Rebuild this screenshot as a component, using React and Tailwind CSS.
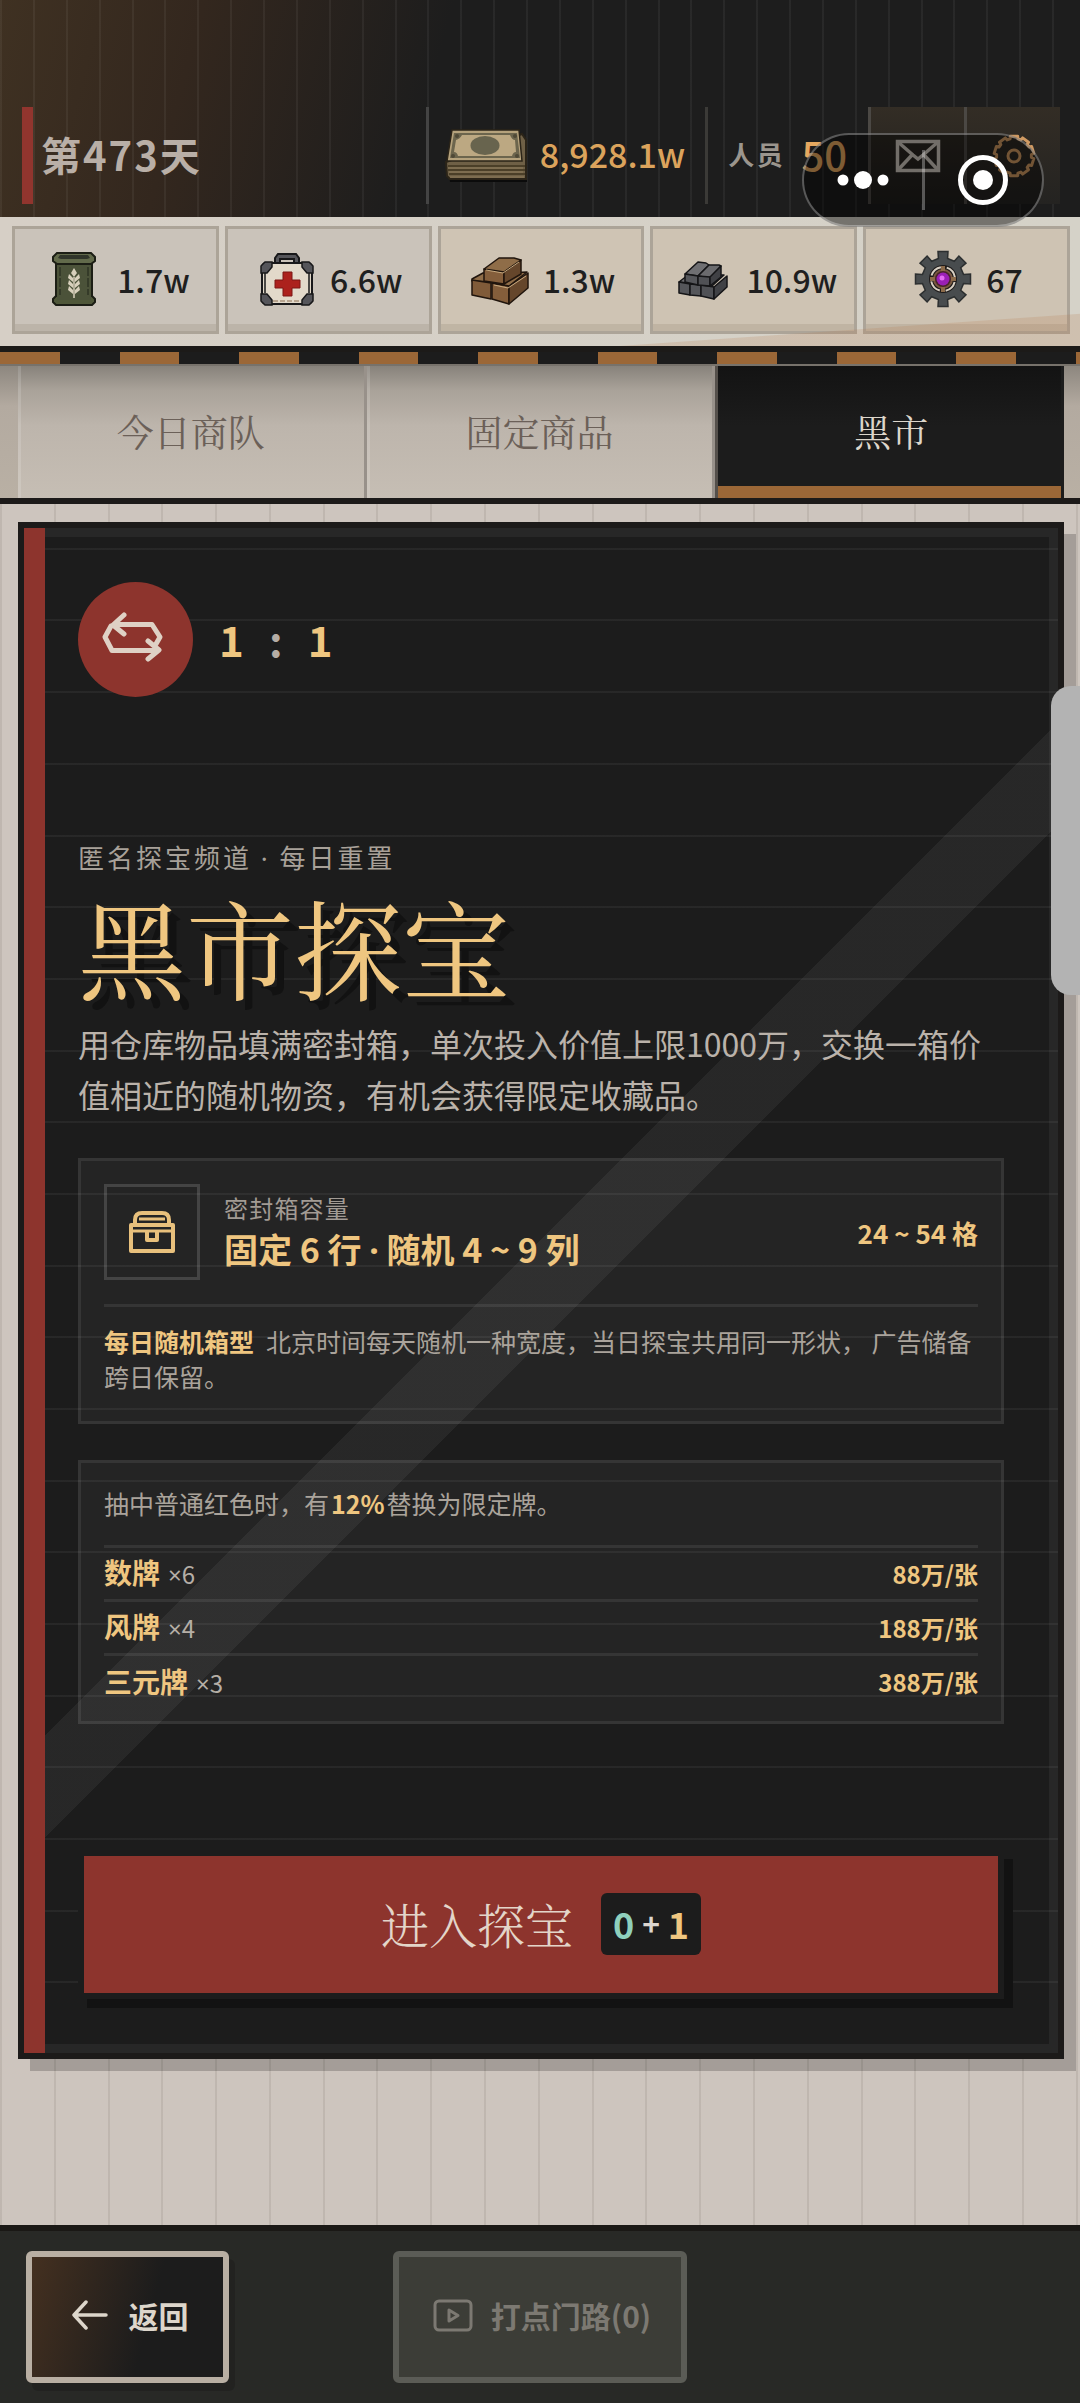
import { useState } from 'react'

const SANS = "font-['Noto_Sans_CJK_SC',sans-serif]"
const SERIF = "font-['Noto_Serif_CJK_SC','Songti_SC','Noto_Sans_CJK_SC',serif]"
// latin face first, keeps the big heading's line box tight
const DISPLAY = "font-['Liberation_Serif','Noto_Serif_CJK_SC','Songti_SC',serif]"
// narrow · and × instead of the full-width CJK ones
const LATIN = "font-['Noto_Sans',sans-serif]"

const TABS = ['今日商队', '固定商品', '黑市']

const TILES = [
  { name: '数牌', count: 6, price: '88万/张' },
  { name: '风牌', count: 4, price: '188万/张' },
  { name: '三元牌', count: 3, price: '388万/张' },
]

function gearPath(cx, cy, teeth, outer, inner, width = 0.26) {
  const step = (Math.PI * 2) / teeth
  const pt = (r, a) => `${(cx + r * Math.sin(a)).toFixed(1)} ${(cy - r * Math.cos(a)).toFixed(1)}`
  const parts = []
  for (let i = 0; i < teeth; i++) {
    const a = i * step
    parts.push(
      pt(inner, a - step * width),
      pt(outer, a - step * width * 0.82),
      pt(outer, a + step * width * 0.82),
      pt(inner, a + step * width)
    )
  }
  return `M${parts.join('L')}Z`
}

function MoneyIcon() {
  return (
    <svg width="84" height="56" viewBox="0 0 84 56" aria-hidden="true">
      <path d="M3 38h79v16H5z" fill="#0b0b0b" />
      <path d="M1 34L2 48L5 51H81V12L77 6Z" fill="#6f6046" stroke="#2b2418" strokeWidth="2" />
      <path d="M3 38H80M3 42H80M4 46H80" stroke="#40351f" strokeWidth="1.5" />
      <path d="M3 40H78M4 44H78M5 49H79" stroke="#8d7b5b" strokeWidth="1" />
      <path d="M7 2H74L77 33H2Z" fill="#b5a27c" stroke="#2b2418" strokeWidth="1.5" />
      <path d="M9 5H72L75 30H5Z" fill="#6c654d" />
      <path d="M17 7H65Q67 12 70 12L71 24Q68 24 67 28H13Q12 24 9 24L11 12Q15 11 17 7Z" fill="#bca882" />
      <ellipse cx="40" cy="17.5" rx="14.5" ry="9.5" fill="#68644e" />
      <circle cx="12" cy="8" r="2" fill="#4f4936" />
      <circle cx="70" cy="8" r="2" fill="#4f4936" />
      <circle cx="8" cy="28" r="2" fill="#4f4936" />
      <circle cx="72" cy="28" r="2" fill="#4f4936" />
    </svg>
  )
}

function GrainIcon() {
  return (
    <svg width="62" height="60" viewBox="0 0 62 60" aria-hidden="true">
      <path d="M13 12H49V50H13Z" fill="#4b5239" stroke="#1c1e15" strokeWidth="2" />
      <path d="M14 4H48L52 8V12L48 15H14L10 12V8Z" fill="#626a4b" stroke="#1c1e15" strokeWidth="2" />
      <path d="M17 6H45L47 9L44 10H18L15 9Z" fill="#30352a" />
      <path d="M13 47L10 50V53L13 56H49L52 53V50L49 47Z" fill="#4f5739" stroke="#1c1e15" strokeWidth="2" />
      <path d="M14 46H48V51H14Z" fill="#4b5239" />
      <path d="M17 18V46M45 18V46" stroke="#353b29" strokeWidth="2" strokeDasharray="9 2" />
      <g fill="#d8d0bc">
        <path d="M31 19l3 5-3 4-3-4z" />
        <path d="M26 25l4 4v4l-5-4zM36 25l-4 4v4l5-4z" />
        <path d="M26 31l4 4v4l-5-4zM36 31l-4 4v4l5-4z" />
        <path d="M26 37l4 4v4l-5-4zM36 37l-4 4v4l5-4z" />
      </g>
      <path d="M31 28V49" stroke="#d8d0bc" strokeWidth="1.5" />
    </svg>
  )
}

function MedkitIcon() {
  return (
    <svg width="62" height="60" viewBox="0 0 62 60" aria-hidden="true">
      <path d="M19 15V9L22 5H40L43 9V15H38V10H24V15Z" fill="#55555a" stroke="#18181a" strokeWidth="2" />
      <rect x="6" y="14" width="50" height="41" rx="4" fill="#e2d9ca" stroke="#18181a" strokeWidth="2" />
      <path d="M9 24V44M53 24V44" stroke="#18181a" strokeWidth="1.5" />
      <path d="M17 52H45" stroke="#b7a48f" strokeWidth="2" strokeDasharray="5 2" />
      <g fill="#55555a" stroke="#18181a" strokeWidth="1.5">
        <path d="M5 24V17L9 13H16V18L11 24Z" />
        <path d="M57 24V17L53 13H46V18L51 24Z" />
        <path d="M5 45V52L9 56H16V51L11 45Z" />
        <path d="M57 45V52L53 56H46V51L51 45Z" />
      </g>
      <path d="M27 23H36V31H44V39H36V47H27V39H19V31H27Z" fill="#ac211d" stroke="#7c1714" strokeWidth="1" />
    </svg>
  )
}

function WoodIcon() {
  return (
    <svg width="62" height="60" viewBox="0 0 62 60" aria-hidden="true">
      <g stroke="#20150d" strokeWidth="1.5" strokeLinejoin="round">
        <path d="M3 30L14 24H26L22 33L3 32Z" fill="#8f6d48" />
        <path d="M3 31L22 34V50L3 46Z" fill="#805b39" />
        <path d="M23 34L40 37V55L23 50Z" fill="#845e3b" />
        <path d="M40 37L59 24V39L40 55Z" fill="#65462b" />
        <path d="M23 34L38 24L58 23L40 37Z" fill="#8f6d48" />
        <path d="M15 20L35 23V35L15 32Z" fill="#845e3b" />
        <path d="M35 23L52 11V25L35 35Z" fill="#65462b" />
        <path d="M15 20L30 9H45L52 11L35 23Z" fill="#8f6d48" />
      </g>
      <path d="M17 21L34 24L50 13M25 36L39 39L57 27" fill="none" stroke="#c9ab80" strokeWidth="1" />
    </svg>
  )
}

function IronIcon() {
  return (
    <svg width="62" height="60" viewBox="0 0 62 60" aria-hidden="true">
      <g stroke="#151517" strokeWidth="1.5" strokeLinejoin="round">
        <path d="M7 33L16 26H52L40 37Z" fill="#6d6d70" />
        <path d="M7 33L18 35V46L7 44Z" fill="#55565a" />
        <path d="M18 35L29 36V47L18 46Z" fill="#55565a" />
        <path d="M29 36L42 38V50L29 47Z" fill="#505155" />
        <path d="M42 38L55 27V38L42 50Z" fill="#404145" />
        <path d="M13 25L26 13L34 14L37 16L26 27Z" fill="#6f6f72" />
        <path d="M26 27L37 16L47 16L49 17L38 29Z" fill="#6b6b6e" />
        <path d="M13 25L26 27V36L13 33Z" fill="#55565a" />
        <path d="M26 27L38 28V37L26 36Z" fill="#505155" />
        <path d="M38 28L49 17V28L38 37Z" fill="#404145" />
      </g>
    </svg>
  )
}

function CoreIcon() {
  return (
    <svg width="62" height="60" viewBox="0 0 62 60" aria-hidden="true">
      <path d={gearPath(31, 30, 8, 28, 21, 0.28)} fill="#484c4e" stroke="#2c2f30" strokeWidth="1.5" />
      <circle cx="31" cy="30" r="14" fill="#1d1a1a" />
      <circle cx="31" cy="30" r="12" fill="none" stroke="#d8cfc2" strokeWidth="2" strokeDasharray="13 6" strokeDashoffset="-3" />
      <circle cx="31" cy="30" r="9" fill="#48242a" stroke="#7a5940" strokeWidth="2" />
      <path d="M31 17V22M31 38V43M18 30H23M39 30H44" stroke="#8b6a49" strokeWidth="4" />
      <circle cx="31" cy="30" r="6.5" fill="#9a1fb5" />
      <circle cx="30" cy="29" r="2.5" fill="#e46bf2" />
    </svg>
  )
}

const RESOURCES = [
  { label: '粮食', value: '1.7w', Icon: GrainIcon, tone: 'bg-[#cac3ba]' },
  { label: '医疗', value: '6.6w', Icon: MedkitIcon, tone: 'bg-[#cac3ba]' },
  { label: '木材', value: '1.3w', Icon: WoodIcon, tone: 'bg-[#cfc4b4]' },
  { label: '铁锭', value: '10.9w', Icon: IronIcon, tone: 'bg-[#cec3b3]' },
  { label: '核心', value: '67', Icon: CoreIcon, tone: 'bg-[#cec3b3]' },
]

function TopBar() {
  return (
    <header className="bg-[repeating-linear-gradient(90deg,rgba(255,255,255,0.05)_0,rgba(255,255,255,0.05)_2px,transparent_2px,transparent_3.044%),linear-gradient(105deg,#3f3122_0%,#33271e_18%,#1d1d1d_40%)] pt-[107px] pb-[13px] pl-[22px] pr-5">
      <div className="flex h-[97px] items-stretch">
        <div className="flex flex-1 items-center border-l-[11px] border-[#91352e] pb-1 pl-2 text-[40px] font-bold tracking-wider text-[#b9afa7]">
          第473天
        </div>
        <div className="flex items-center gap-[11px] border-l-[3px] border-[#444] pl-4 pr-5">
          <MoneyIcon />
          <span className="pb-1 text-[34px] font-medium text-[#dba35c]">8,928.1w</span>
        </div>
        <div className="flex items-center gap-4 border-l-[3px] border-[#3b3a37] pb-1 pl-5 pr-[21px]">
          <span className="text-[26px] font-bold tracking-widest text-[#9b958d]">人员</span>
          <span className="text-[40px] font-medium text-[#e5a860]">50</span>
        </div>
        <button
          type="button"
          aria-label="邮件"
          className="flex w-24 items-center justify-center border-l-[3px] border-[#4b4844] bg-[linear-gradient(180deg,#332d25,#1f1e1c)]"
        >
          <svg width="46" height="34" viewBox="0 0 46 34" fill="none" stroke="#cfc8bf" strokeWidth="3.5" aria-hidden="true">
            <rect x="2.5" y="2.5" width="41" height="29" />
            <path d="M3 3L18 16L23 20L28 16L43 3M3 31L17 16M43 31L29 16" />
          </svg>
        </button>
        <button
          type="button"
          aria-label="设置"
          className="flex w-24 items-center justify-center border-l-[3px] border-[#4b4844] bg-[linear-gradient(180deg,#332d25,#242321)]"
        >
          <svg width="46" height="46" viewBox="0 0 46 46" fill="none" stroke="#d09a62" strokeWidth="3" strokeLinejoin="round" aria-hidden="true">
            <path d={gearPath(23, 23, 10, 20, 17.5, 0.36)} />
            <circle cx="23" cy="23" r="6" />
          </svg>
        </button>
      </div>
    </header>
  )
}

function HostCapsule() {
  return (
    <div className="absolute right-9 top-[133px] flex h-[94px] w-[242px] items-center rounded-full border-2 border-white/30 bg-black/45">
      <button type="button" aria-label="更多" className="flex flex-1 items-center justify-center">
        <svg width="52" height="20" viewBox="0 0 52 20" fill="#fff" aria-hidden="true">
          <circle cx="6" cy="10" r="5.5" />
          <circle cx="26" cy="10" r="9" />
          <circle cx="46" cy="10" r="5.5" />
        </svg>
      </button>
      <span className="h-[60px] w-[3px] bg-white/30" />
      <button type="button" aria-label="关闭" className="flex flex-1 items-center justify-center">
        <svg width="52" height="52" viewBox="0 0 52 52" aria-hidden="true">
          <circle cx="26" cy="26" r="22.5" fill="none" stroke="#fff" strokeWidth="5" />
          <circle cx="26" cy="26" r="10" fill="#fff" />
        </svg>
      </button>
    </div>
  )
}

function ResourceBar() {
  return (
    <section className="relative bg-[linear-gradient(90deg,#d6cfc6,#d5d2c8)] pt-[9px] pb-3 pl-3 pr-[10px]">
      <ul className="grid grid-cols-5 gap-[6px]">
        {RESOURCES.map(({ label, value, Icon, tone }) => (
          <li
            key={label}
            aria-label={label}
            className={`flex h-[108px] items-center justify-center gap-3 border-[3px] border-[#aca498] pb-[2px] pl-[2px] shadow-[inset_0_-7px_0_rgba(90,70,50,0.12)] ${tone}`}
          >
            <Icon />
            <span className="text-[32px] font-medium text-[#1f1f1f]">{value}</span>
          </li>
        ))}
      </ul>
      <span className="pointer-events-none absolute inset-0 bg-[linear-gradient(176deg,transparent_84%,rgba(180,120,75,0.2)_84.5%)]" />
    </section>
  )
}

function TabBar({ active, onChange }) {
  return (
    <nav className="border-t-2 border-b-[6px] border-t-[#77726b] border-b-[#1c1a19] bg-[linear-gradient(180deg,#8d877f_0,#b3aaa0_40px,#b9b0a4_100%)] pl-[18px] pr-4">
      <div role="tablist" className="grid grid-cols-3">
        {TABS.map((tab) => (
          <button
            key={tab}
            type="button"
            role="tab"
            aria-selected={tab === active}
            onClick={() => onChange(tab)}
            className={`h-[132px] text-[37px] ${SERIF} ${
              tab === active
                ? 'border-l-[3px] border-[#55504b] bg-[linear-gradient(180deg,#131313,#1c1c1c_60px)] text-[#ddd6cb] shadow-[inset_-3px_0_0_#1c1c1c,inset_0_-12px_0_#9b6737]'
                : 'border-r-[3px] border-[#98918a] bg-[linear-gradient(180deg,#87827b_0,#a9a299_24px,#bdb5ac_60px,#c6beb4_100%)] text-[#6b6058] shadow-[inset_3px_0_0_rgba(255,255,255,0.15)]'
            }`}
          >
            {tab}
          </button>
        ))}
      </div>
    </nav>
  )
}

function CapacityBox() {
  return (
    <section className="mt-[38px] border-[3px] border-white/8 bg-white/4 px-[23px] pt-[23px] pb-[27px]">
      <div className="flex items-center">
        <div className="flex size-24 items-center justify-center border-[3px] border-white/15">
          <svg width="48" height="44" viewBox="0 0 48 44" fill="none" stroke="#e8c07c" strokeWidth="4" strokeLinejoin="round" aria-hidden="true">
            <path d="M7 14V10Q7 3 14 3H34Q41 3 41 10V14" />
            <path d="M11 9H37" strokeWidth="3" />
            <path d="M3 15H45V41H3Z" />
            <path d="M3 21H45" strokeWidth="3" />
            <path d="M19 22V30H29V22" />
          </svg>
        </div>
        <div className="ml-6 flex-1 pb-1">
          <p className="text-[24px] leading-[38px] tracking-wider text-[#a29b94]">密封箱容量</p>
          <p className="text-[34px] leading-[44px] font-bold text-[#efc680]">
            固定 6 行 <span className={LATIN}>·</span> 随机 4 ~ 9 列
          </p>
        </div>
        <p className="text-[26px] font-bold text-[#efc680]">24 ~ 54 格</p>
      </div>
      <p className="mt-6 border-t-[3px] border-white/8 pt-[17px] text-[25px] leading-[35px] text-[#aaa39b]">
        <strong className="mr-3 font-bold text-[#efc680]">每日随机箱型</strong>
        北京时间每天随机一种宽度，当日探宝共用同一形状， 广告储备跨日保留。
      </p>
    </section>
  )
}

function OddsBox() {
  return (
    <section className="mt-9 border-[3px] border-white/8 bg-white/4 px-[23px] pt-[23px] pb-3">
      <p className="text-[25px] leading-[35px] text-[#aaa39b]">
        抽中普通红色时，有<strong className="mx-[2px] font-bold text-[#efc680]">12%</strong>替换为限定牌。
      </p>
      <table className="mt-6 w-full">
        <tbody>
          {TILES.map((tile) => (
            <tr key={tile.name} className="h-[54px] border-t-[3px] border-white/8">
              <th scope="row" className="text-left text-[28px] leading-[36px] font-bold text-[#efc680]">
                {tile.name}
                <span className="ml-2 text-[24px] font-normal text-[#b5aea6]">
                  <span className={LATIN}>×</span>
                  {tile.count}
                </span>
              </th>
              <td className="text-right text-[24px] leading-[36px] font-bold text-[#efc680]">{tile.price}</td>
            </tr>
          ))}
        </tbody>
      </table>
    </section>
  )
}

function BlackMarketCard() {
  return (
    <article className="border-[6px] border-[#1c1a19] bg-[#1c1c1c] shadow-[12px_12px_0_rgba(0,0,0,0.2)]">
      <div className="relative bg-[linear-gradient(135deg,transparent_48%,rgba(255,255,255,0.05)_48%,rgba(255,255,255,0.05)_52%,transparent_52%),repeating-linear-gradient(0deg,transparent_0,transparent_calc(4.7%_-_2px),rgba(255,255,255,0.05)_calc(4.7%_-_2px),rgba(255,255,255,0.05)_4.7%)] p-[54px] shadow-[inset_0_0_0_9px_rgba(255,255,255,0.05)]">
        <span className="absolute inset-y-0 left-0 w-[21px] bg-[#8d342d]" />
        <div className="flex items-center">
          <div className="flex size-[115px] items-center justify-center rounded-full bg-[#8d342d] pr-[6px] pb-[6px]">
            <svg width="62" height="50" viewBox="0 0 62 50" fill="none" stroke="#dfd1c5" strokeWidth="5" strokeLinecap="round" strokeLinejoin="round" aria-hidden="true">
              <path d="M22 3L11 13L22 22M12 12.5H50L58 25L54 32" />
              <path d="M46 29L57 38L46 47M55 38.5H10L3 25L9 14" />
            </svg>
          </div>
          <p className="ml-[26px] flex items-center gap-5 pb-[2px] text-[42px] font-bold text-[#efc680]">
            <span>1</span>
            <span className="w-6 text-center text-[#b5ada5]">:</span>
            <span>1</span>
          </p>
        </div>
        <p className="mt-[140px] text-[26px] leading-10 tracking-[3px] text-[#a8a199]">
          匿名探宝频道 <span className={LATIN}>·</span> 每日重置
        </p>
        <h1 className={`mt-[18px] text-[108px] leading-[120px] text-[#efc680] [text-shadow:9px_9px_0_#121212] ${DISPLAY}`}>
          黑市探宝
        </h1>
        <p className="mt-[2px] text-[32px] leading-[51px] text-[#bab2aa]">
          用仓库物品填满密封箱，单次投入价值上限1000万，交换一箱价值相近的随机物资，有机会获得限定收藏品。
        </p>
        <CapacityBox />
        <OddsBox />
        <button
          type="button"
          className="mt-[126px] flex h-[149px] w-full items-center justify-center gap-7 border-[6px] border-[#1c1c1c] bg-[#8d342d] shadow-[9px_9px_0_#121212]"
        >
          <span className={`text-[48px] font-light text-[#e3d5c9] ${SERIF}`}>进入探宝</span>
          <span className="flex h-[62px] items-center gap-2 rounded-md bg-[#1c1c1c] px-3 pb-[2px] text-[36px] font-bold">
            <span className="text-[#8fd0bc]">0</span>
            <span className="text-[30px] text-[#ddd6cf]">+</span>
            <span className="text-[#efc680]">1</span>
          </span>
        </button>
      </div>
    </article>
  )
}

function BottomBar() {
  return (
    <footer className="grid grid-cols-[1fr_auto_1fr] items-center border-t-[6px] border-[#1a1815] bg-[#282926] px-[26px] py-5">
      <button
        type="button"
        className="flex h-[132px] w-[203px] items-center justify-center gap-5 rounded-md border-[6px] border-[#b9afa3] bg-[linear-gradient(105deg,#443020_0%,#1c1c1c_60%)] pb-1 pl-1 text-[30px] font-bold text-[#ddd6cb] shadow-[6px_8px_0_rgba(0,0,0,0.15)]"
      >
        <svg width="38" height="30" viewBox="0 0 38 30" fill="none" stroke="currentColor" strokeWidth="3.5" strokeLinecap="round" strokeLinejoin="round" aria-hidden="true">
          <path d="M35 15H3M15 2L3 15L15 28" />
        </svg>
        返回
      </button>
      <button
        type="button"
        disabled
        className="flex h-[132px] items-center gap-[18px] rounded-md border-[6px] border-[#5b5c56] bg-[#3c3d37] pr-[30px] pb-1 pl-[34px] text-[30px] font-bold text-[#7c7972]"
      >
        <svg width="40" height="33" viewBox="0 0 40 33" fill="none" stroke="currentColor" strokeWidth="3" strokeLinejoin="round" aria-hidden="true">
          <rect x="2" y="2" width="36" height="29" rx="4" />
          <path d="M16 11V22L25 16.5Z" />
        </svg>
        打点门路(0)
      </button>
    </footer>
  )
}

export default function App() {
  const [tab, setTab] = useState('黑市')

  return (
    <div className={`relative flex min-h-screen flex-col overflow-hidden bg-[#cdc5be] ${SANS}`}>
      <TopBar />
      <ResourceBar />
      <div className="h-[18px] border-t-[6px] border-[#1c1a18] bg-[repeating-linear-gradient(90deg,#9b6737_0,#9b6737_5.53%,#1c1c1c_5.53%,#1c1c1c_11.065%)]" />
      <TabBar active={tab} onChange={setTab} />
      <main className="flex-1 bg-[repeating-linear-gradient(90deg,rgba(90,80,70,0.12)_0,rgba(90,80,70,0.12)_2px,transparent_2px,transparent_4.98%)] pt-[18px] pr-4 pb-[18px] pl-[18px]">
        <BlackMarketCard />
      </main>
      <BottomBar />
      <HostCapsule />
      <span className="absolute right-0 top-[686px] h-[309px] w-[29px] rounded-l-[20px] bg-[#b3b3b3]" />
    </div>
  )
}
